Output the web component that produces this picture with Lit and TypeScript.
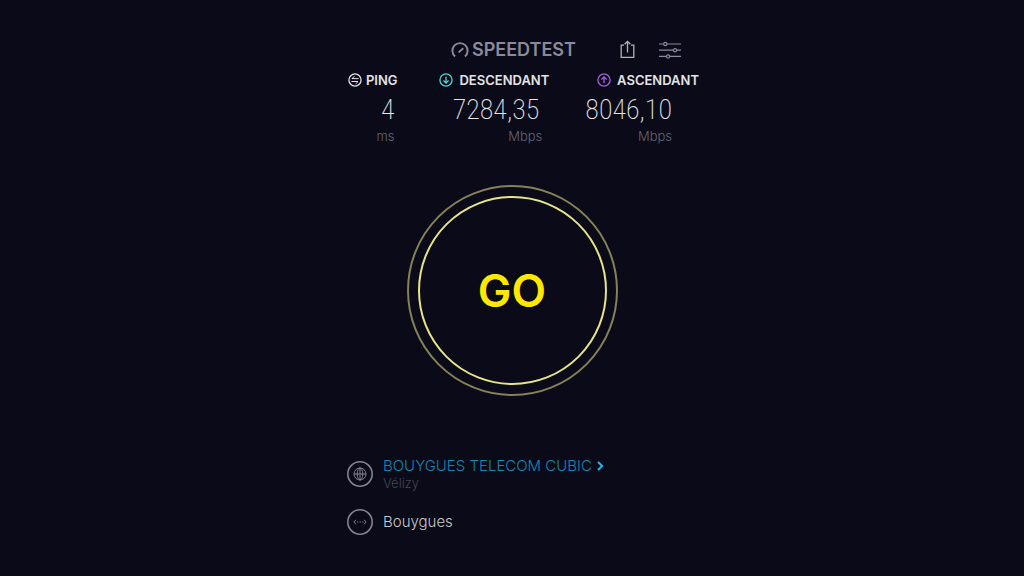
import { LitElement, html, css, svg } from "lit";
import { customElement } from "lit/decorators.js";

interface Metric {
  kind: string;
  label: string;
  value: string;
  unit: string;
}

const METRICS: Metric[] = [
  { kind: "ping", label: "PING", value: "4", unit: "ms" },
  { kind: "down", label: "DESCENDANT", value: "7284,35", unit: "Mbps" },
  { kind: "up", label: "ASCENDANT", value: "8046,10", unit: "Mbps" },
];

const GLYPHS: Record<string, unknown> = {
  ping: svg`<path stroke-width="1" d="M10.6 5.6H4L6.4 3.2M3.4 8.5H10L7.6 10.9" />`,
  down: svg`<path d="M7 3.8V10M4.4 7.5L7 10L9.6 7.5" />`,
  up: svg`<path d="M7 10.2V4M4.4 6.5L7 4L9.6 6.5" />`,
};

@customElement("app-root")
export class AppRoot extends LitElement {
  static styles = css`
    :host {
      display: block;
      min-height: 100vh;
      box-sizing: border-box;
      background: #0a0a18;
      color: #e4e4e6;
      font-family: Inter, "Open Sans", sans-serif;
    }
    svg {
      display: block;
      flex: none;
      fill: none;
      stroke: currentColor;
    }
    button {
      padding: 0;
      border: 0;
      background: none;
      color: inherit;
      font: inherit;
      cursor: pointer;
    }
    h1, p, dl, dd, dt {
      margin: 0;
    }
    .page {
      display: flex;
      flex-direction: column;
      align-items: center;
      padding: 40px 16px;
    }
    .bar {
      display: flex;
      align-items: center;
      width: 100%;
      max-width: 338px;
      box-sizing: border-box;
      padding-left: 108px;
      height: 20px;
      color: #8b8a9b;
    }
    .brand {
      display: flex;
      align-items: center;
      gap: 3px;
      margin-right: auto;
    }
    .name {
      font-size: 18px;
      line-height: 20px;
      font-weight: 600;
    }
    .tools {
      display: flex;
      align-items: center;
      gap: 24px;
    }
    .share {
      color: #b3b2ad;
    }
    .metrics {
      display: flex;
      justify-content: flex-end;
      gap: 36px;
      width: 100%;
      max-width: 374px;
      box-sizing: border-box;
      padding-top: 10px;
      white-space: nowrap;
    }
    .metric {
      text-align: right;
    }
    .metric.ping {
      margin-right: 6px;
    }
    .label {
      display: flex;
      align-items: center;
      justify-content: flex-end;
      gap: 6px;
      font-size: 13px;
      line-height: 20px;
      font-weight: 600;
    }
    .ping .label {
      gap: 4px;
    }
    .down svg {
      color: #4fd6cf;
    }
    .up svg {
      color: #a45ee0;
    }
    .value {
      font-family: "Roboto Condensed", "Open Sans Condensed", Roboto, sans-serif;
      font-size: 28px;
      line-height: 40px;
      font-weight: 200;
      padding-right: 10px;
    }
    .unit {
      font-size: 13px;
      line-height: 12px;
      font-weight: 300;
      color: #666574;
      padding-right: 7px;
    }
    .ping .value, .ping .unit {
      padding-right: 3px;
    }
    .up .value, .up .unit {
      padding-right: 27px;
    }
    .go {
      display: grid;
      place-items: center;
      box-sizing: border-box;
      width: 211px;
      height: 211px;
      margin-top: 43px;
      padding: 9px;
      border: 2px solid #858158;
      border-radius: 50%;
      color: #ffe800;
      font-size: 45px;
      font-weight: 600;
    }
    .inner {
      display: grid;
      place-items: center;
      box-sizing: border-box;
      width: 100%;
      height: 100%;
      border: 2px solid #e9e486;
      border-radius: 50%;
    }
    .network {
      display: grid;
      gap: 18px;
      width: 100%;
      max-width: 330px;
      margin-top: 60px;
    }
    .row {
      display: flex;
      align-items: center;
      gap: 10px;
      font-size: 15px;
      line-height: 20px;
      font-weight: 300;
      white-space: nowrap;
    }
    .row svg {
      color: #85848f;
    }
    .server {
      display: flex;
      align-items: center;
      gap: 5px;
      color: #1586b4;
      text-decoration: none;
    }
    .row .server svg {
      color: #27b5e8;
    }
    .city {
      font-size: 13px;
      line-height: 15px;
      color: #474653;
    }
    .isp {
      color: #c9c9cc;
    }
  `;

  private metric(m: Metric) {
    return html`<div class="metric ${m.kind}">
      <dt class="label">
        <svg width="14" height="14" viewBox="0 0 14 14" stroke-width="1.3" aria-hidden="true">
          <circle cx="7" cy="7" r="6.1" />${GLYPHS[m.kind]}
        </svg>
        ${m.label}
      </dt>
      <dd class="value">${m.value}</dd>
      <dd class="unit">${m.unit}</dd>
    </div>`;
  }

  render() {
    return html`<main class="page">
      <header class="bar">
        <h1 class="brand">
          <svg width="18" height="16" viewBox="0 0 18 16" stroke-width="1.9" aria-hidden="true">
            <path d="M4.1 14.5A7.6 7.6 0 1 1 13.9 14.5M7.6 10.4L12.3 6.2" />
          </svg>
          <span class="name">SPEEDTEST</span>
        </h1>
        <div class="tools">
          <button class="share" aria-label="Partager">
            <svg width="15" height="20" viewBox="0 0 15 20" stroke-width="1.3">
              <path d="M4 5.2H1.2V17.4H13.8V5.2H11M7.5 12.5V1.4M4.6 4.2L7.5 1.3L10.4 4.2" />
            </svg>
          </button>
          <button aria-label="Réglages">
            <svg width="22" height="18" viewBox="0 0 22 18" stroke-width="1.2">
              <path d="M0 3H4.6M8 3H22M0 9.2H14.3M17.7 9.2H22M0 15.4H7.4M10.8 15.4H22" />
              <circle cx="6.3" cy="3" r="1.6" />
              <circle cx="16" cy="9.2" r="1.6" />
              <circle cx="9.1" cy="15.4" r="1.6" />
            </svg>
          </button>
        </div>
      </header>

      <dl class="metrics">${METRICS.map((m) => this.metric(m))}</dl>

      <button class="go"><span class="inner">GO</span></button>

      <section class="network">
        <div class="row">
          <svg width="26" height="26" viewBox="0 0 26 26" aria-hidden="true">
            <circle cx="13" cy="13" r="12.2" stroke-width="1.6" />
            <circle cx="13" cy="13" r="6" />
            <ellipse cx="13" cy="13" rx="2.8" ry="6" />
            <path d="M13 7V19M7 13H19" />
          </svg>
          <div>
            <a class="server" href="#">BOUYGUES TELECOM CUBIC
              <svg width="7" height="10" viewBox="0 0 7 10" stroke-width="2" aria-hidden="true">
                <path d="M1 1L5.2 5L1 9" />
              </svg>
            </a>
            <p class="city">Vélizy</p>
          </div>
        </div>
        <div class="row">
          <svg width="26" height="26" viewBox="0 0 26 26" aria-hidden="true">
            <circle cx="13" cy="13" r="12.2" stroke-width="1.6" />
            <path d="M9 10.8L6.8 13L9 15.2M17 10.8L19.2 13L17 15.2" />
            <path d="M10 13H16.4" stroke-dasharray="1.2 1.4" />
          </svg>
          <p class="isp">Bouygues</p>
        </div>
      </section>
    </main>`;
  }
}
